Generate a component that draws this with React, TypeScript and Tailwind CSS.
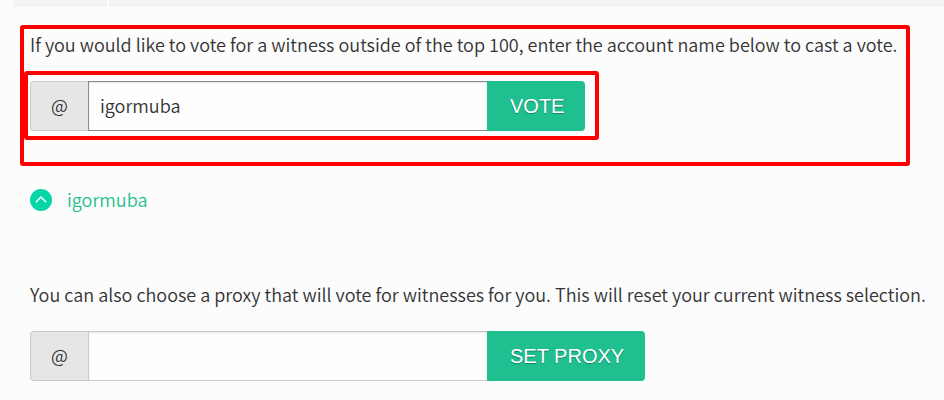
import React from "react";

type FieldProps = { id: string; label: string; action: string; value?: string; focused?: boolean };

function AccountField({ id, label, action, value, focused }: FieldProps) {
  return (
    <form className="flex h-[50px]" onSubmit={(e) => e.preventDefault()}>
      <label htmlFor={id} className="flex w-[58px] items-center justify-center rounded-l border border-r-0 border-[#cacaca] bg-[#e6e6e6] pb-0.5 text-[18px]">
        @
      </label>
      <input
        id={id}
        aria-label={label}
        defaultValue={value}
        className={`w-[400px] min-w-0 border bg-[#fefefe] px-[11px] pb-0.5 text-[18px] shadow-[inset_0_1px_2px_rgba(10,10,10,0.1)] outline-none ${focused ? "border-[#8a8a8a]" : "border-[#cacaca]"}`}
      />
      <button className="-ml-px shrink-0 rounded-r bg-[#1fbf8f] px-[23px] pr-[21px] font-['Liberation_Sans',sans-serif] text-xl font-normal text-white [text-shadow:0_1px_1px_rgba(0,0,0,0.3)]">
        {action}
      </button>
    </form>
  );
}

export default function App() {
  return (
    <main className="min-h-screen overflow-hidden bg-[#fcfcfc] font-['Noto_Sans_CJK_SC',sans-serif] text-[18px] font-[350] text-[#333333]">
      <div className="ml-[14px] flex h-[7px] gap-[2px]">
        <div className="w-[93px] bg-[#f3f3f3]" />
        <div className="flex-1 bg-[#f3f3f3]" />
      </div>
      <section className="ml-5 mt-[18px] max-w-[890px] rounded-[3px] border-4 border-[#fe0000] pb-[22px]">
        <p className="ml-[6px] leading-[30px] sm:whitespace-nowrap">
          If you would like to vote for a witness outside of the top 100, enter the account name below to cast a vote.
        </p>
        <div className="mt-3 max-w-[575px] rounded-[3px] border-4 border-[#fe0000] px-[2px] pt-[6px] pb-[5px]">
          <AccountField id="witness" label="Witness account" action="VOTE" value="igormuba" focused />
        </div>
      </section>
      <a href="#igormuba" className="ml-[30px] mt-[18px] flex w-fit items-center gap-[15px] leading-[30px] text-[#1fbf8f]">
        <svg width="22" height="22" viewBox="0 0 22 22" aria-hidden="true">
          <circle cx="11" cy="11" r="11" fill="#06d6a9" />
          <path d="m5.8 13.3 5.2-5.2 5.2 5.2" fill="none" stroke="white" strokeWidth="1.4" />
        </svg>
        <span className="pb-0.5">igormuba</span>
      </a>
      <section className="ml-[30px] mt-[63px]">
        <p className="leading-[30px]">
          You can also choose a proxy that will vote for witnesses for you. This will reset your current witness selection.
        </p>
        <div className="mt-[22px]">
          <AccountField id="proxy" label="Proxy account" action="SET PROXY" />
        </div>
      </section>
    </main>
  );
}
